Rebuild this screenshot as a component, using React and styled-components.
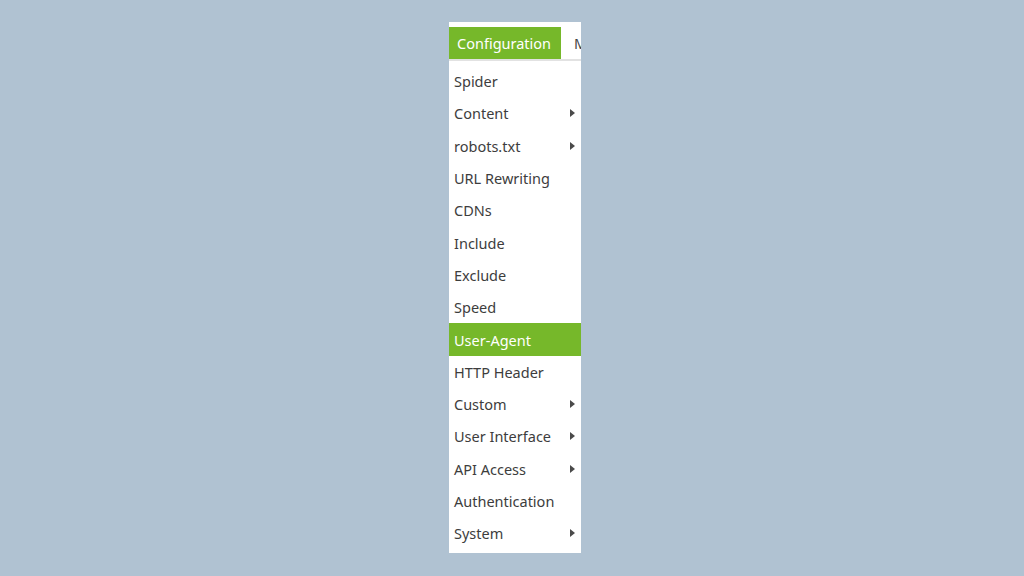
import React from 'react';
import styled, { createGlobalStyle } from 'styled-components';

const GlobalStyle = createGlobalStyle`
    html, body {
        margin: 0;
        padding: 0;
        background: #b0c2d2;
    }
    body {
        font-family: "Noto Sans", "Open Sans", sans-serif;
    }
`;

const Page = styled.div`
    width: 1024px;
    height: 576px;
    display: flex;
    justify-content: flex-start;
    align-items: flex-start;
    padding: 22px 0 0 449px;
    box-sizing: border-box;
`;

const Panel = styled.div`
    width: 132px;
    background: #fff;
    padding: 5px 0 4px;
    overflow: hidden;
`;

const MenuBar = styled.div`
    display: flex;
    height: 32px;
    border-bottom: 2px solid #e2e2e2;
`;

const BarItem = styled.div`
    height: 32px;
    display: flex;
    align-items: center;
    padding: 0 10px 0 8px;
    font-size: 14.5px;
    white-space: nowrap;
    color: ${(p) => (p.$active ? '#fff' : '#444')};
    background: ${(p) => (p.$active ? '#76b82a' : 'transparent')};
    flex-shrink: 0;
    & + & {
        padding-left: 13px;
    }
`;

const Menu = styled.ul`
    list-style: none;
    margin: 0;
    padding: 4px 0 0;
`;

const Item = styled.li`
    height: 32.3px;
    display: flex;
    align-items: center;
    justify-content: space-between;
    padding: 0 6px 0 5px;
    font-size: 14.5px;
    color: ${(p) => (p.$active ? '#fff' : '#3d3d3d')};
    background: ${(p) => (p.$active ? '#76b82a' : 'transparent')};
`;

const Caret = styled.span`
    width: 0;
    height: 0;
    border-top: 4.5px solid transparent;
    border-bottom: 4.5px solid transparent;
    border-left: 5px solid #4a4a4a;
`;

const items = [
    { label: 'Spider' },
    { label: 'Content', sub: true },
    { label: 'robots.txt', sub: true },
    { label: 'URL Rewriting' },
    { label: 'CDNs' },
    { label: 'Include' },
    { label: 'Exclude' },
    { label: 'Speed' },
    { label: 'User-Agent', active: true },
    { label: 'HTTP Header' },
    { label: 'Custom', sub: true },
    { label: 'User Interface', sub: true },
    { label: 'API Access', sub: true },
    { label: 'Authentication' },
    { label: 'System', sub: true },
];

export default function App() {
    return (
        <>
            <GlobalStyle />
            <Page>
                <Panel>
                    <MenuBar>
                        <BarItem $active>Configuration</BarItem>
                        <BarItem>Mode</BarItem>
                    </MenuBar>
                    <Menu>
                        {items.map((it) => (
                            <Item key={it.label} $active={it.active}>
                                <span>{it.label}</span>
                                {it.sub && <Caret />}
                            </Item>
                        ))}
                    </Menu>
                </Panel>
            </Page>
        </>
    );
}
